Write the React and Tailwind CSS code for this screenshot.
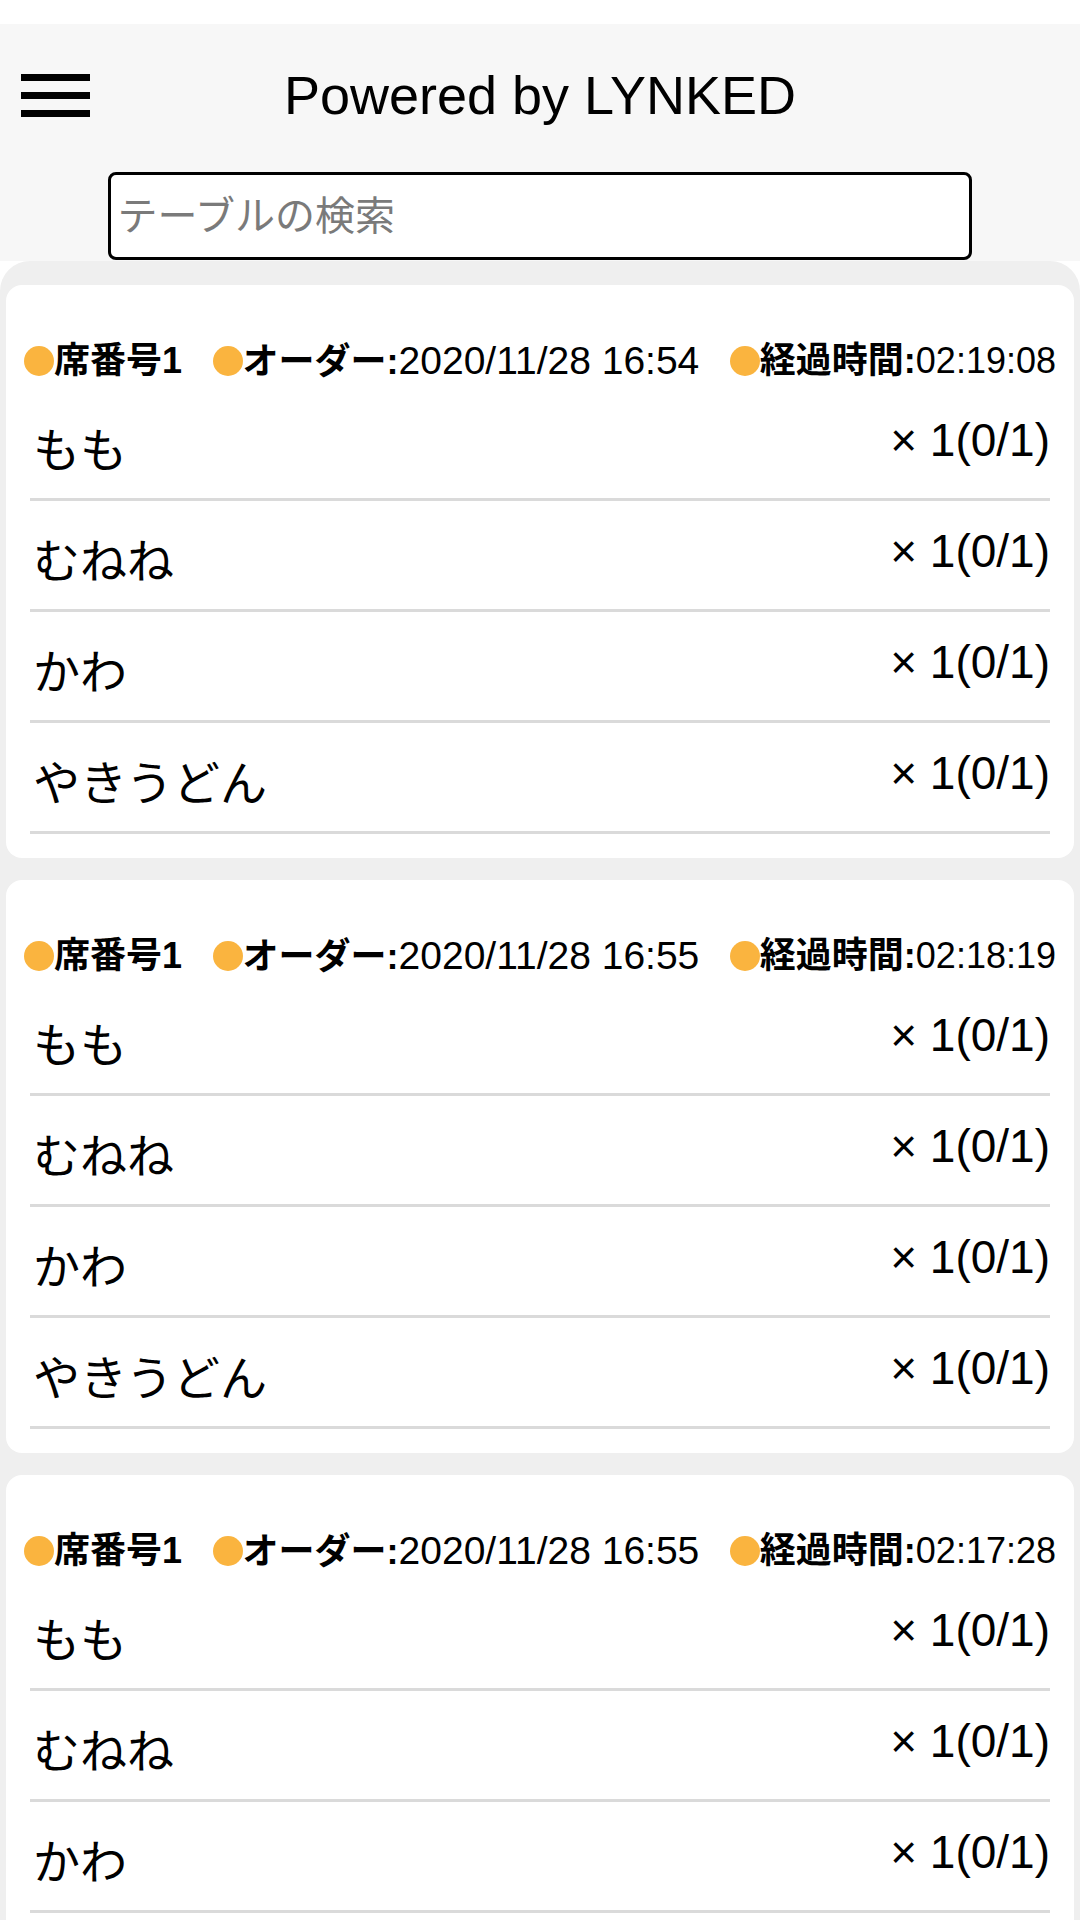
import { useState } from "react";

const items = ["もも", "むねね", "かわ", "やきうどん"];

const orders = [
  { seat: "1", time: "2020/11/28 16:54", elapsed: "02:19:08" },
  { seat: "1", time: "2020/11/28 16:55", elapsed: "02:18:19" },
  { seat: "1", time: "2020/11/28 16:55", elapsed: "02:17:28" },
];

function Dot() {
  return <span className="w-[30px] h-[30px] rounded-full bg-[#fab43f] shrink-0" />;
}

function OrderCard({ order }) {
  return (
    <div className="bg-white rounded-[16px] pb-[24px] mb-[22px]">
      <div className="flex justify-between items-center px-[18px] pt-[56px] pb-[10px]">
        <div className="flex items-center">
          <Dot />
          <span className="text-[36px] leading-none font-bold">席番号{order.seat}</span>
        </div>
        <div className="flex items-center">
          <Dot />
          <span className="leading-none">
            <span className="text-[36px] font-bold">オーダー:</span>
            <span className="text-[39px]">{order.time}</span>
          </span>
        </div>
        <div className="flex items-center">
          <Dot />
          <span className="leading-none">
            <span className="text-[36px] font-bold">経過時間:</span>
            <span className="text-[36px]">{order.elapsed}</span>
          </span>
        </div>
      </div>
      <div className="px-[24px]">
        {items.map((name, i) => (
          <div
            key={i}
            className="flex h-[111px] justify-between items-start border-b-[3px] border-[#dadada] pt-[27px]"
          >
            <span className="text-[47px] leading-none mt-[10px] pl-[3px]">{name}</span>
            <span className="text-[46px] leading-none">× 1(0/1)</span>
          </div>
        ))}
      </div>
    </div>
  );
}

export default function App() {
  const [query, setQuery] = useState("");

  return (
    <div className="min-h-screen bg-white pt-[24px] text-black font-['Liberation_Sans','Noto_Sans_CJK_JP',sans-serif]">
      <div className="bg-[#f7f7f7] pt-[40px] pb-px">
        <div className="grid grid-cols-[1fr_auto_1fr] items-center h-[62px]">
          <div className="pl-[21px] flex flex-col gap-[11px] w-[90px]">
            <span className="block h-[7px] w-[69px] bg-black" />
            <span className="block h-[7px] w-[69px] bg-black" />
            <span className="block h-[7px] w-[69px] bg-black" />
          </div>
          <h1 className="text-[54px] leading-none">Powered by LYNKED</h1>
          <div />
        </div>
        <div className="flex justify-center mt-[46px]">
          <input
            type="text"
            value={query}
            onChange={(e) => setQuery(e.target.value)}
            placeholder="テーブルの検索"
            className="w-[864px] h-[88px] ml-[-1px] border-[3px] border-black rounded-[8px] bg-white px-[7px] text-[40px] placeholder:text-[#7a7a7a] outline-none"
          />
        </div>
      </div>
      <div className="bg-[#efefef] rounded-t-[30px] pt-[24px] px-[6px]">
        {orders.map((order, i) => (
          <OrderCard key={i} order={order} />
        ))}
      </div>
    </div>
  );
}
